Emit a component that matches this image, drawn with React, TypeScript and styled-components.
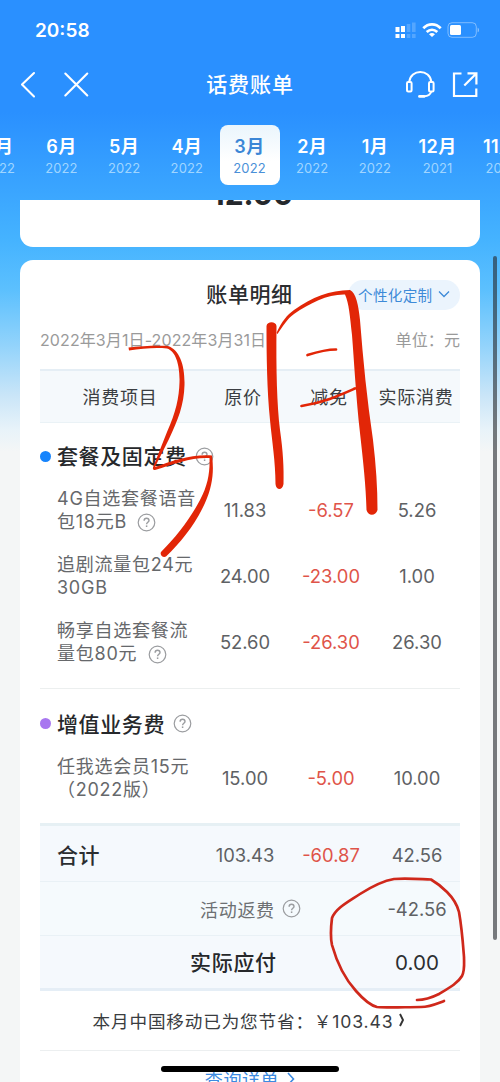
import React from "react";
import styled, { createGlobalStyle, css } from "styled-components";

const GlobalStyle = createGlobalStyle`
  * { box-sizing: border-box; }
  html, body { margin: 0; padding: 0; }
  body {
    font-family: Inter, "Noto Sans CJK SC", sans-serif;
    color: #2b2d30;
    overflow: hidden;
  }
`;

const Screen = styled.div`
  position: relative;
  width: 500px;
  height: 1082px;
  overflow: hidden;
  display: flex;
  flex-direction: column;
  background: linear-gradient(
    180deg,
    #2a90ff 0,
    #2a90ff 112px,
    #3aa5ff 190px,
    #45b3ff 240px,
    #5cc0fe 290px,
    #92d3fb 345px,
    #c9e5f8 395px,
    #e8f3f9 430px,
    #f4f6f6 452px
  );
`;

const Header = styled.header`
  height: 200px;
  flex: none;
  color: #fff;
`;

const StatusBar = styled.div`
  display: flex;
  align-items: center;
  justify-content: space-between;
  height: 60px;
  padding: 0 21px 0 35px;
`;

const Clock = styled.span`
  font-size: 19px;
  font-weight: 600;
  line-height: 24px;
  margin-top: 1px;
`;

const StatusIcons = styled.svg`
  display: block;
`;

const NavBar = styled.div`
  display: grid;
  grid-template-columns: 1fr auto 1fr;
  align-items: center;
  height: 50px;
  padding: 0 22px 0 20px;
`;

const NavTitle = styled.h1`
  margin: 0 0 0 2px;
  font-size: 21px;
  line-height: 30px;
  font-weight: 500;
  letter-spacing: 0.9px;
`;

const NavGroup = styled.div<{ $end?: boolean }>`
  display: flex;
  justify-content: ${(p) => (p.$end ? "flex-end" : "flex-start")};
`;

const MonthStrip = styled.nav`
  display: flex;
  margin: 15px 0 0 -32.6px;
`;

const MonthTab = styled.div<{ $active?: boolean }>`
  flex: none;
  width: 60px;
  height: 60px;
  margin: 0 1.35px;
  padding-top: 10px;
  border-radius: 8px;
  text-align: center;
  white-space: nowrap;
  ${(p) =>
    p.$active &&
    css`
      background: linear-gradient(180deg, #eaf5fc, #ffffff 60%);
      color: #3b86d6;
    `}
`;

const MonthName = styled.div`
  font-size: 18px;
  line-height: 24px;
  font-weight: 600;
  letter-spacing: 0.4px;
`;

const MonthYear = styled.div<{ $active?: boolean }>`
  font-size: 13px;
  line-height: 18px;
  letter-spacing: 0.1px;
  color: ${(p) => (p.$active ? "#4a90d8" : "rgba(190, 228, 255, 0.8)")};
`;

const ScrollArea = styled.main`
  flex: 1;
  min-height: 0;
  overflow: hidden;
  padding: 0 20px;
`;

const AmountCard = styled.section`
  height: 47px;
  overflow: hidden;
  background: #fff;
  border-radius: 0 0 13px 13px;
  text-align: center;
`;

const Amount = styled.div`
  margin-top: -28px;
  padding-left: 5px;
  font-size: 30px;
  line-height: 44px;
  font-weight: 700;
  color: #25282c;
`;

const BillCard = styled.section`
  margin-top: 13px;
  height: 840px;
  padding: 0 20px;
  background: #fff;
  border-radius: 13px 13px 0 0;
`;

const CardHead = styled.div`
  display: grid;
  grid-template-columns: 1fr auto 1fr;
  align-items: center;
  height: 69px;
`;

const CardTitle = styled.h2`
  margin: 1px 0 0 -1px;
  grid-column: 2;
  font-size: 21px;
  line-height: 30px;
  font-weight: 500;
  letter-spacing: 0.6px;
`;

const CustomButton = styled.button`
  justify-self: end;
  display: flex;
  align-items: center;
  gap: 6px;
  width: 112px;
  height: 30px;
  padding: 0 9px 1px 10px;
  border: 0;
  border-radius: 15px;
  background: #ebf4fd;
  color: #3d8ad8;
  font-family: inherit;
  font-size: 14.6px;
  letter-spacing: 0.3px;
  white-space: nowrap;
`;

const Period = styled.div`
  display: flex;
  justify-content: space-between;
  height: 40px;
  line-height: 23px;
  font-size: 16px;
  letter-spacing: 0.1px;
  color: #9a9a9a;
  white-space: nowrap;
`;

const TableHead = styled.div`
  display: grid;
  grid-template-columns: 160px 86px 86px 88px;
  align-items: center;
  height: 54px;
  padding-bottom: 1px;
  margin-bottom: 1px;
  border-top: 2px solid #e5eef5;
  border-bottom: 1px solid #eaf2f6;
  background: #f5f9fc;
  font-size: 18px;
  letter-spacing: 0.7px;
  text-align: center;
  color: #3b3e42;
  white-space: nowrap;
`;

const Section = styled.section<{ $top: number; $divided?: boolean }>`
  padding: ${(p) => p.$top}px 0 12.5px;
  border-bottom: ${(p) => (p.$divided ? "1px solid #ecefef" : "0")};
`;

const SectionTitle = styled.h3`
  display: flex;
  align-items: center;
  height: 42px;
  margin: 0;
  font-size: 21px;
  font-weight: 500;
  letter-spacing: 0.6px;
  color: #26282b;
`;

const TitleText = styled.span`
  margin-top: -2px;
`;

const Dot = styled.i<{ $color: string }>`
  width: 11px;
  height: 11px;
  margin-right: 6px;
  border-radius: 50%;
  background: ${(p) => p.$color};
`;

const Row = styled.div`
  display: grid;
  grid-template-columns: 162px 86px 86px 86px;
  align-items: center;
  height: 66px;
`;

const ItemName = styled.div`
  padding: 0 0 0 17px;
  font-size: 18px;
  line-height: 23px;
  letter-spacing: 0.75px;
  color: #66686b;
  white-space: nowrap;
`;

const Num = styled.span<{ $red?: boolean }>`
  text-align: center;
  font-size: 18.4px;
  color: ${(p) => (p.$red ? "#df5449" : "#5e6164")};
`;

const Totals = styled.div`
  border-top: 3px solid #e6f0f4;
  border-bottom: 3px solid #e5eef6;
  background: #f5f9fd;
`;

const TotalRow = styled(Row)<{ $h: number; $top?: number; $line?: boolean; $tint?: boolean }>`
  height: ${(p) => p.$h}px;
  padding-top: ${(p) => p.$top ?? 0}px;
  border-bottom: ${(p) => (p.$line ? "1px solid #e9f1f6" : "0")};
  background: ${(p) => (p.$tint ? "#f5fafd" : "transparent")};
`;

const TotalLabel = styled.strong`
  padding-left: 17px;
  margin-top: -2px;
  font-size: 21px;
  font-weight: 500;
  letter-spacing: 0.4px;
`;

const SpanLabel = styled.span<{ $strong?: boolean }>`
  grid-column: 1 / 4;
  display: flex;
  align-items: center;
  margin-top: ${(p) => (p.$strong ? -2 : 0)}px;
  padding-left: ${(p) => (p.$strong ? 150 : 160)}px;
  font-size: ${(p) => (p.$strong ? 21 : 18)}px;
  font-weight: ${(p) => (p.$strong ? 500 : 400)};
  letter-spacing: 0.7px;
  color: ${(p) => (p.$strong ? "#26282b" : "#6d7073")};
`;

const Payable = styled.span`
  text-align: center;
  font-size: 20.6px;
  color: #2c2e31;
`;

const Savings = styled.div`
  display: flex;
  align-items: center;
  justify-content: center;
  gap: 5px;
  height: 60px;
  padding-bottom: 1px;
  border-bottom: 1px solid #eceff0;
  font-size: 17.6px;
  letter-spacing: 0.85px;
  white-space: nowrap;
  color: #3a3c3f;
`;

const DetailLink = styled.div`
  display: flex;
  align-items: center;
  justify-content: center;
  gap: 8px;
  height: 56px;
  font-size: 18px;
  letter-spacing: 0.6px;
  color: #3c8ae0;
`;

const Help = styled.svg<{ $gap: number }>`
  width: 19px;
  height: 19px;
  margin-left: ${(p) => p.$gap}px;
  vertical-align: -4px;
  flex: none;
`;

const ScrollThumb = styled.div`
  position: absolute;
  left: 492.5px;
  top: 256px;
  width: 4px;
  height: 684px;
  border-radius: 2px;
  background: rgba(40, 44, 48, 0.62);
`;

const HomeIndicator = styled.div`
  position: absolute;
  left: 161px;
  top: 1066px;
  width: 178px;
  height: 6px;
  border-radius: 3px;
  background: #000;
`;

const Marker = styled.svg`
  position: absolute;
  left: 0;
  top: 0;
  pointer-events: none;
`;

const HelpIcon = ({ gap = 8 }: { gap?: number }) => (
  <Help $gap={gap} viewBox="0 0 19 19" fill="none" stroke="#9b9da0" strokeWidth="1.2">
    <circle cx="9.5" cy="9.5" r="8.3" />
    <path d="M7.1 7.7c0-1.5 1-2.5 2.5-2.5s2.4.9 2.4 2.2c0 1.8-2.4 1.9-2.4 3.8" strokeWidth="1.4" />
    <path d="M9.6 12.4v1.6" strokeWidth="1.5" />
  </Help>
);

const months = [
  ["7月", "2022"],
  ["6月", "2022"],
  ["5月", "2022"],
  ["4月", "2022"],
  ["3月", "2022"],
  ["2月", "2022"],
  ["1月", "2022"],
  ["12月", "2021"],
  ["11月", "2021"],
];

type Item = { lines: [string, string]; help?: boolean; values: [string, string, string] };

const planItems: Item[] = [
  { lines: ["4G自选套餐语音", "包18元B"], help: true, values: ["11.83", "-6.57", "5.26"] },
  { lines: ["追剧流量包24元", "30GB"], values: ["24.00", "-23.00", "1.00"] },
  { lines: ["畅享自选套餐流", "量包80元"], help: true, values: ["52.60", "-26.30", "26.30"] },
];

const extraItems: Item[] = [
  { lines: ["任我选会员15元", "（2022版）"], values: ["15.00", "-5.00", "10.00"] },
];

const Values = ({ values }: { values: [string, string, string] }) => (
  <>
    <Num>{values[0]}</Num>
    <Num $red>{values[1]}</Num>
    <Num>{values[2]}</Num>
  </>
);

const ItemRow = ({ item }: { item: Item }) => (
  <Row>
    <ItemName>
      {item.lines[0]}
      <br />
      {item.lines[1]}
      {item.help && <HelpIcon gap={10.5} />}
    </ItemName>
    <Values values={item.values} />
  </Row>
);

export default function App() {
  return (
    <Screen>
      <GlobalStyle />
      <Header>
        <StatusBar>
          <Clock>20:58</Clock>
          <StatusIcons width="84" height="18" viewBox="395 21 84 18" fill="#fff">
            <path d="M395.5 27h4v5h-4zM401 26h4v6h-4zM395.5 34h4v4h-4zM401 34h4v4h-4z" />
            <path d="M406.700 24h3.600v8h-3.600zM412 22.500h3.600v9.500h-3.600zM406.700 34h3.600v4h-3.600zM412 34h3.600v4h-3.600z" opacity="0.2" />
            <g fill="none" stroke="#fff" strokeWidth="2.700">
              <path d="M423.300 28.300c5-5.200 12.400-5.200 17.400 0" />
              <path d="M426.700 32c3.200-3 7.400-3 10.600 0" />
            </g>
            <path d="M429 34.200c1.900-1.500 4.100-1.500 6 0l-3 2.800z" />
            <rect x="448" y="22.700" width="28.300" height="14.600" rx="4" fill="none" stroke="#fff" strokeOpacity="0.4" />
            <rect x="450" y="25" width="11" height="10" rx="1.500" />
            <path d="M477.700 27.700v4.600c1.600-.7 1.600-3.900 0-4.600z" opacity="0.5" />
          </StatusIcons>
        </StatusBar>
        <NavBar>
          <NavGroup>
            <svg width="70" height="30" viewBox="20 70 70 30" fill="none" stroke="#fff" strokeWidth="2.100" strokeLinecap="round" strokeLinejoin="round">
              <path d="M34 73 22 84.500 34 96.500M65.300 73.500l22 22M87.300 73.500l-22 22" />
            </svg>
          </NavGroup>
          <NavTitle>话费账单</NavTitle>
          <NavGroup $end>
            <svg width="73" height="32" viewBox="405 69 73 32" fill="none" stroke="#fff" strokeWidth="2">
              <path d="M409.300 81.500c.8-6 5.500-9.600 11-9.600s10.200 3.600 11 9.600M431.300 91.500c-1 3-3.600 4.600-7 4.800" />
              <rect x="407" y="82" width="4.600" height="9.500" rx="1.200" />
              <rect x="429" y="82" width="4.600" height="9.500" rx="1.200" />
              <path d="M419.500 96.400h4.500" strokeWidth="2.800" strokeLinecap="round" />
              <path d="M461.500 73.500h-7.500v22.500h22.300v-7.500M467.500 73.300h8.900v11.200M475.800 74 464.300 85.500" strokeWidth="2.200" />
            </svg>
          </NavGroup>
        </NavBar>
        <MonthStrip>
          {months.map(([name, year]) => (
            <MonthTab key={name} $active={name === "3月"}>
              <MonthName>{name}</MonthName>
              <MonthYear $active={name === "3月"}>{year}</MonthYear>
            </MonthTab>
          ))}
        </MonthStrip>
      </Header>

      <ScrollArea>
        <AmountCard>
          <Amount>12.00</Amount>
        </AmountCard>
        <BillCard>
          <CardHead>
            <CardTitle>账单明细</CardTitle>
            <CustomButton>
              个性化定制
              <svg width="12" height="8" viewBox="0 0 12 8" fill="none" stroke="#3d8ad8" strokeWidth="1.300">
                <path d="M1 1.500l5 5 5-5" />
              </svg>
            </CustomButton>
          </CardHead>
          <Period>
            <span>2022年3月1日-2022年3月31日</span>
            <span>单位：元</span>
          </Period>
          <TableHead>
            <span>消费项目</span>
            <span>原价</span>
            <span>减免</span>
            <span>实际消费</span>
          </TableHead>

          <Section $top={11} $divided>
            <SectionTitle>
              <Dot $color="#1684fc" />
              <TitleText>套餐及固定费</TitleText>
              <HelpIcon />
            </SectionTitle>
            {planItems.map((item) => (
              <ItemRow key={item.lines[0]} item={item} />
            ))}
          </Section>
          <Section $top={14}>
            <SectionTitle>
              <Dot $color="#a877f0" />
              <TitleText>增值业务费</TitleText>
              <HelpIcon />
            </SectionTitle>
            {extraItems.map((item) => (
              <ItemRow key={item.lines[0]} item={item} />
            ))}
          </Section>

          <Totals>
            <TotalRow $h={56} $top={3} $line>
              <TotalLabel>合计</TotalLabel>
              <Values values={["103.43", "-60.87", "42.56"]} />
            </TotalRow>
            <TotalRow $h={54} $line $tint>
              <SpanLabel>
                活动返费
                <HelpIcon gap={7} />
              </SpanLabel>
              <Num>-42.56</Num>
            </TotalRow>
            <TotalRow $h={52}>
              <SpanLabel $strong>实际应付</SpanLabel>
              <Payable>0.00</Payable>
            </TotalRow>
          </Totals>
          <Savings>
            本月中国移动已为您节省：￥103.43
            <svg width="9" height="14" viewBox="0 0 9 14" fill="none" stroke="#333" strokeWidth="1.900">
              <path d="M2 1L5 7L2 13" strokeLinejoin="round" />
            </svg>
          </Savings>
          <DetailLink>
            查询详单
            <svg width="8" height="14" viewBox="0 0 8 14" fill="none" stroke="#3c8ae0" strokeWidth="1.600">
              <path d="M1 1l5.500 6L1 13" />
            </svg>
          </DetailLink>
        </BillCard>
      </ScrollArea>

      <ScrollThumb />
      <Marker width="500" height="1082" viewBox="0 0 500 1082" fill="#e22607">
        <path d="M128.500 347.500C142 346 155 345.500 168 346C180 350 185 366 184.500 385C184 405 178 420 169 439L155 467C172 461 192 454 212 455.500C214 470 213 485 205 503C195 525 181 542 166 556.500C163 558 159.500 555 161 552C177 536 190 519 200 500C208 485 210 472 209.500 458C192 457 174 464 155 470C152.500 470 152.500 468 153.500 466L167 432C176 412 179 398 179.500 382C180 366 176 351 167 348.500C155 347.500 142 348.500 129 350.500Z" />
        <path d="M266.500 326C267 321 276 321 276.500 326C276 370 277 405 280 430C283 451 284 468 283.500 484C282.500 491 276 490.500 275.500 484C275.500 462 272 441 270 420C267 390 266.500 356 266.500 326Z" />
        <path d="M276.500 333C282 321 287 315 294 310C312 297 330 290.500 350 290C356 293 358.500 305 360 320C363 359 367 400 373 440C376 465 377.500 488 377.500 510C376 516 368 516.500 366.500 510C366 486 363 460 360 433C356 397 354 360 352 335C350 317 349 303 345 294.500C328 294 310 303 294 314C287 319 283 326 277.500 334Z" />
        <g fill="none" stroke="#e22607" strokeWidth="2.700" strokeLinecap="round" strokeLinejoin="round">
          <path d="M307.500 355C317 352 327 349.500 336 349.500" />
          <path d="M301.500 406C325 402 338 396 355 388.500" />
          <path
            stroke="#cf281b"
            d="M444 1001C436 1004 429 1007 421 1007C405 1007 390 1008 377 1007C369 1005 363 999 356 991C346 980 337 963 332 945C330 936 331 926 332 918C336 908 348 902 360 894C371 887 382 881 394 879C406 878 418 879 431 879.500C437 883 442 887 447 892C453 898 457 904 459 912C462 929 463 944 464 957C464 963 465 970 462 976C458 983 449 988 439 994C431 998 424 1000 417 1000"
          />
        </g>
      </Marker>
      <HomeIndicator />
    </Screen>
  );
}
